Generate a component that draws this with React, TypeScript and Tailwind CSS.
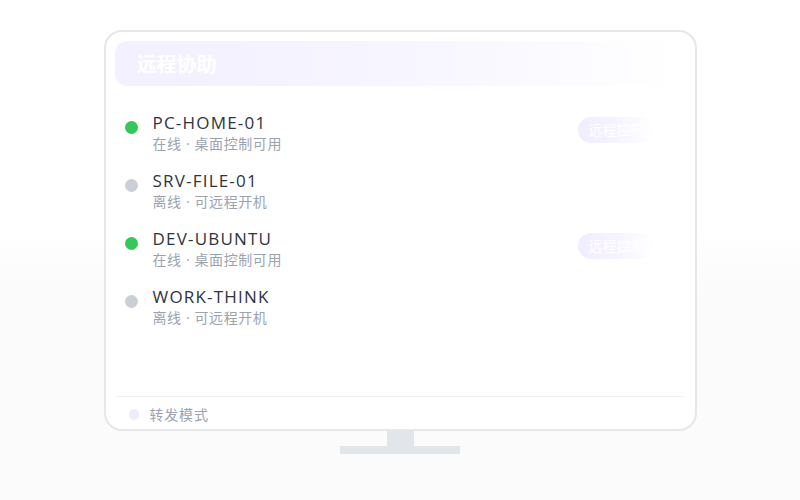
import React from 'react'

const devices = [
  { name: 'PC-HOME-01', online: true },
  { name: 'SRV-FILE-01', online: false },
  { name: 'DEV-UBUNTU', online: true },
  { name: 'WORK-THINK', online: false },
]

const font = { fontFamily: '"Open Sans", "Noto Sans CJK SC", sans-serif' }

export default function App() {
  return (
    <div
      className="w-[800px] h-[500px] bg-gradient-to-b from-white from-[46%] to-[#fbfbfc] to-[58%] flex flex-col items-center pt-[30px]"
      style={font}
    >
      {/* Monitor */}
      <div className="w-[593px] h-[401px] bg-white border-2 border-[#e5e7eb] rounded-[18px] flex flex-col px-[9px] pt-[9px]">
        {/* Header */}
        <div className="h-[45px] shrink-0 rounded-[12px] bg-gradient-to-r from-[#f3f0ff] via-[#f7f5ff] to-white flex items-center pl-[22px] mr-[4px]">
          <span className="text-[20px] leading-[26px] mt-[3px] font-bold text-white">远程协助</span>
        </div>

        {/* Device list */}
        <div className="flex-1 flex flex-col pt-[26px] pl-[10px] pr-[30px]">
          {devices.map((d) => (
            <div key={d.name} className="h-[58px] flex items-start">
              <span
                className={
                  d.online
                    ? 'mt-[9px] w-[13px] h-[13px] rounded-full bg-[#34c759] shrink-0'
                    : 'mt-[9px] w-[13px] h-[13px] rounded-full bg-[#cbd0d8] shrink-0'
                }
              />
              <div className="ml-[15px] flex flex-col flex-1">
                <span className="text-[17px] leading-[22px] tracking-[1.2px] text-[#2f3440]">{d.name}</span>
                <span className="text-[14px] leading-[20px] tracking-[0.6px] text-[#9ca3af]">
                  {d.online ? '在线 · 桌面控制可用' : '离线 · 可远程开机'}
                </span>
              </div>
              {d.online && (
                <span className="mt-[5px] mr-[2px] h-[26px] w-[76px] rounded-full bg-gradient-to-r from-[#f1edff] via-[#f6f3ff] to-white text-white text-[14px] leading-[26px] pl-[11px] overflow-hidden whitespace-nowrap">
                  远程控制
                </span>
              )}
            </div>
          ))}
        </div>

        {/* Footer */}
        <div className="mx-[2px] border-t border-[#f0f1f4] h-[33px] shrink-0 flex items-center pl-[12px] pt-[2px]">
          <span className="w-[10px] h-[11px] rounded-full bg-[#efebfd]" />
          <span className="ml-[11px] text-[14px] tracking-[0.8px] text-[#9ca3af]">转发模式</span>
        </div>
      </div>

      {/* Stand */}
      <div className="w-[27px] h-[15px] bg-[#e2e5e9]" />
      <div className="w-[120px] h-[8px] bg-[#e2e5e9]" />
    </div>
  )
}
